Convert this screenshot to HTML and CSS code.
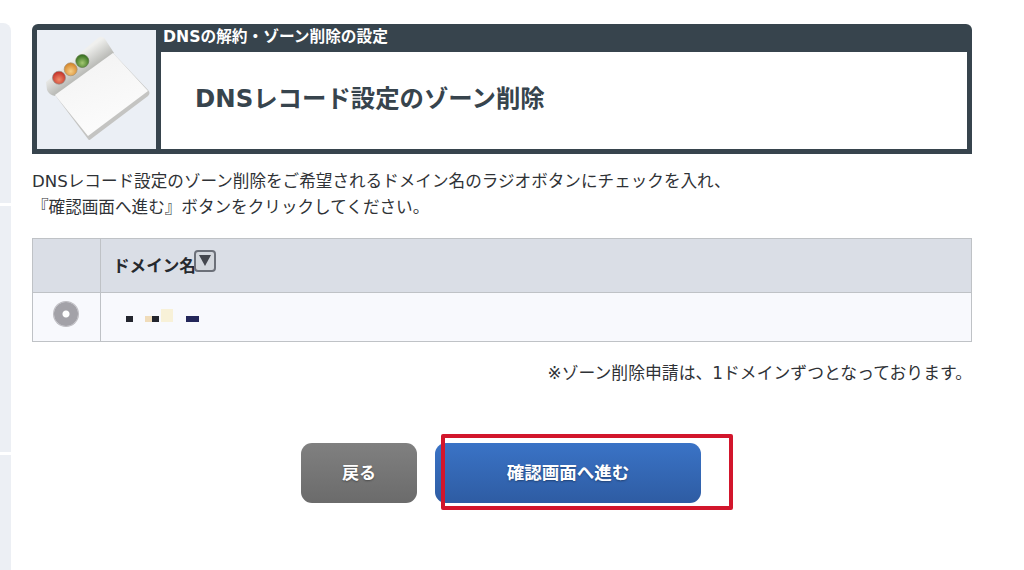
FILE: index.html
```html
<!DOCTYPE html>
<html lang="ja">
  <head>
    <meta charset="UTF-8" />
    <title>DNSレコード設定のゾーン削除</title>
    <link rel="stylesheet" href="styles.css">
  </head>
  <body>
    <div class="side">
      <div class="side-block first"></div>
      <div class="side-block middle"></div>
      <div class="side-block last"></div>
    </div>

    <div class="main">
      <div class="page-head">
        <div class="head-icon">
          <svg width="119" height="119" viewBox="0 0 119 119">
            <defs>
              <linearGradient id="bar" gradientUnits="userSpaceOnUse" x1="35" y1="30" x2="45" y2="44">
                <stop offset="0" stop-color="#f0f0ee" />
                <stop offset="1" stop-color="#bcbdb9" />
              </linearGradient>
              <linearGradient id="pane" x1="0.3" y1="0" x2="0.7" y2="1">
                <stop offset="0" stop-color="#f3f3f3" />
                <stop offset="1" stop-color="#fdfdfd" />
              </linearGradient>
              <radialGradient id="red" cx="0.5" cy="0.65" r="0.6">
                <stop offset="0" stop-color="#f08a68" />
                <stop offset="1" stop-color="#c4322a" />
              </radialGradient>
              <radialGradient id="orange" cx="0.5" cy="0.65" r="0.6">
                <stop offset="0" stop-color="#f6cf86" />
                <stop offset="1" stop-color="#d5852a" />
              </radialGradient>
              <radialGradient id="green" cx="0.5" cy="0.65" r="0.6">
                <stop offset="0" stop-color="#a3c872" />
                <stop offset="1" stop-color="#37701e" />
              </radialGradient>
            </defs>
            <path d="M9 52 L61 8 Q65 5 68 9 L77 23 L18 66 Q12 65 10 60 Z" fill="url(#bar)" />
            <path d="M18 65 L51 109 Q52 111 54 109 L111 66 Q114 63 111 60 L76 23 Z" fill="#c4c4c2" />
            <path d="M18 65 L76 23 L111 61 L51 106 Z" fill="url(#pane)" />
            <circle cx="22" cy="47.7" r="6.5" fill="url(#red)" stroke="#8f8f8a" stroke-width="0.7" />
            <circle cx="33.7" cy="39.3" r="6.5" fill="url(#orange)" stroke="#a5957a" stroke-width="0.7" />
            <circle cx="45.3" cy="31" r="6.5" fill="url(#green)" stroke="#5d7a4a" stroke-width="0.7" />
          </svg>
        </div>
        <div class="head-body">
          <div class="head-label">DNSの解約・ゾーン削除の設定</div>
          <h1>DNSレコード設定のゾーン削除</h1>
        </div>
      </div>

      <p class="lead">
        DNSレコード設定のゾーン削除をご希望されるドメイン名のラジオボタンにチェックを入れ、<br>
        『確認画面へ進む』ボタンをクリックしてください。
      </p>

      <table class="domains">
        <tr>
          <th class="col-radio"></th>
          <th class="col-name">ドメイン名<span class="sort"></span></th>
        </tr>
        <tr>
          <td class="col-radio"><span class="radio"></span></td>
          <td class="col-name">
            <!-- ドメイン名はモザイク -->
            <div class="mosaic">
              <span class="dark small"></span>
              <span class="beige"></span>
              <span class="dark small"></span>
              <span class="cream"></span>
              <span class="navy"></span>
            </div>
          </td>
        </tr>
      </table>

      <p class="note">※ゾーン削除申請は、1ドメインずつとなっております。</p>

      <div class="buttons">
        <a href="#" class="btn btn-back">戻る</a>
        <a href="#" class="btn btn-next">確認画面へ進む</a>
      </div>

      <div class="highlight"></div>
    </div>
  </body>
</html>
```

FILE: styles.css
```css
html,
body {
  height: 570px;
  overflow: hidden;
}

body {
  margin: 0;
  display: flex;
  background-color: white;
  color: #33383d;
  font-family: "DejaVu Sans", "Noto Sans CJK JP", sans-serif;
  font-size: 16.6px;
}

.side {
  width: 11px;
  padding-top: 23px;
  display: flex;
  flex-direction: column;
  gap: 3px;
  flex-shrink: 0;
}

.side-block {
  background-color: #eceff4;
}

.side-block.first {
  height: 180px;
  border-top-right-radius: 8px;
}

.side-block.middle {
  height: 246px;
}

.side-block.last {
  flex: 1;
}

.main {
  position: relative;
  width: 940px;
  margin-left: 21px;
  padding-top: 24px;
}

.page-head {
  display: flex;
  gap: 5px;
  height: 130px;
  box-sizing: border-box;
  padding: 6px 5px 5px;
  background-color: #37444d;
  border-radius: 6px 6px 0 0;
}

.head-icon {
  width: 119px;
  height: 119px;
  background-color: #ebeff5;
}

.head-icon svg {
  display: block;
}

.head-body {
  flex: 1;
  display: flex;
  flex-direction: column;
}

.head-label {
  height: 22px;
  margin-top: -3px;
  margin-bottom: 3px;
  padding-left: 2px;
  color: white;
  font-size: 15.7px;
  font-weight: bold;
  line-height: 20px;
}

.head-body h1 {
  flex: 1;
  margin: 0;
  padding: 0 0 9px 34px;
  display: flex;
  align-items: center;
  background-color: white;
  color: #37444d;
  font-size: 24.4px;
  font-weight: bold;
}

.lead {
  margin: 15px 0 0;
  line-height: 26px;
  color: #2f3236;
}

.domains {
  width: 100%;
  margin-top: 17px;
  border-collapse: collapse;
}

.domains th,
.domains td {
  border: 1px solid #bfc2c6;
  padding: 0;
}

.domains th {
  height: 53px;
  background-color: #dadee6;
  text-align: left;
  font-size: 16.6px;
}

.domains td {
  height: 48px;
  background-color: #f8f9fd;
}

.col-radio {
  width: 67px;
  text-align: center;
}

.domains th.col-name {
  padding-left: 12px;
  color: #26292e;
}

.domains td.col-name {
  padding-left: 25px;
}

.sort {
  display: inline-block;
  position: relative;
  top: -6px;
  width: 18px;
  height: 18px;
  margin-left: -2px;
  border: 2px solid #6c7079;
  border-radius: 4px;
  background-color: #d3d7dd;
  vertical-align: middle;
}

.sort::after {
  content: "";
  position: absolute;
  left: 3px;
  top: 3px;
  border-left: 6px solid transparent;
  border-right: 6px solid transparent;
  border-top: 11px solid #44474e;
}

.radio {
  display: inline-block;
  position: relative;
  top: -3px;
  left: -1px;
  width: 14px;
  height: 14px;
  border: 5px solid #a3a2a8;
  border-radius: 50%;
  background: radial-gradient(circle, white 0 3px, #a3a2a8 4px);
  box-shadow: 0 0 0 1px #bdbcc1;
  vertical-align: middle;
}

.mosaic {
  display: flex;
  align-items: flex-end;
  height: 13px;
  margin-bottom: 4px;
}

.mosaic span {
  display: block;
  height: 6px;
}

.mosaic .small {
  width: 7px;
  background-color: #23252e;
}

.mosaic .beige {
  width: 7px;
  margin-left: 12px;
  background-color: #f0dcba;
}

.mosaic .cream {
  width: 12px;
  height: 13px;
  margin-left: 2px;
  background-color: #f8f1d8;
}

.mosaic .navy {
  width: 13px;
  margin-left: 13px;
  background-color: #24275a;
}

.note {
  margin: 19px 0 0;
  text-align: right;
  font-size: 16.8px;
  line-height: 24px;
  color: #2f3236;
  padding-right: 0;
  letter-spacing: 0.05px;
}

.buttons {
  display: flex;
  justify-content: center;
  gap: 18px;
  margin-top: 58px;
  padding-right: 2px;
}

.btn {
  height: 60px;
  line-height: 60px;
  border-radius: 11px;
  box-sizing: border-box;
  color: white;
  font-size: 17px;
  font-weight: bold;
  text-align: center;
  text-decoration: none;
  text-shadow: 0 1px 2px rgba(0, 0, 0, 0.35);
}

.btn-back {
  width: 116px;
  background: linear-gradient(#808080, #6b6b6b);
}

.btn-next {
  width: 266px;
  background: linear-gradient(#3a73c6, #2e5ca3);
  font-size: 17.5px;
}

/* 赤枠 */
.highlight {
  position: absolute;
  left: 409px;
  top: 434px;
  width: 284px;
  height: 68px;
  border: 4px solid #d2162c;
  border-radius: 2px;
}
```
